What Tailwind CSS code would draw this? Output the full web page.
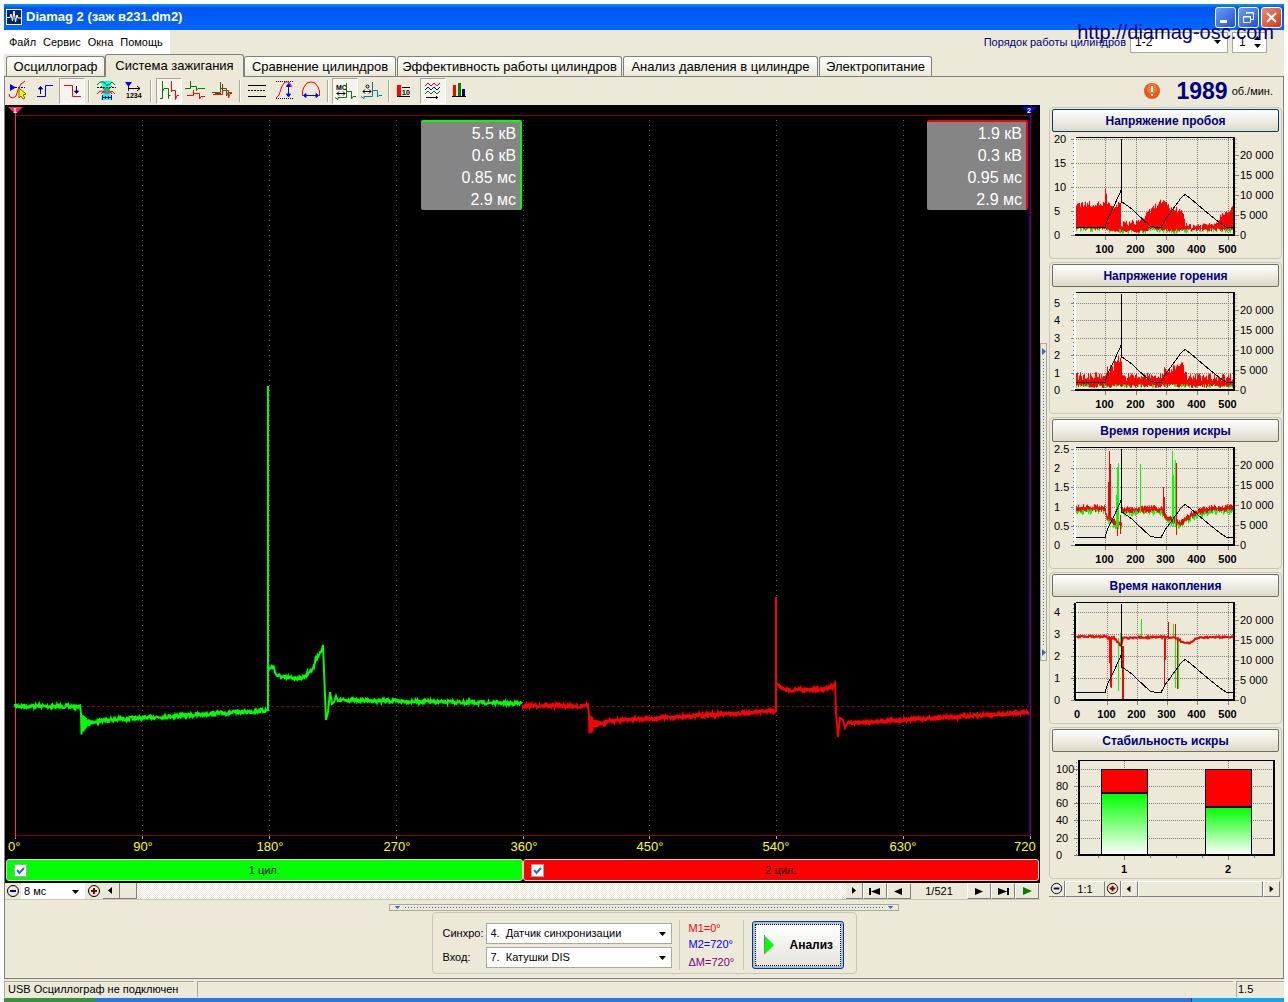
<!DOCTYPE html>
<html lang="ru">
<head>
<meta charset="utf-8">
<title>Diamag 2</title>
<script src="https://cdn.jsdelivr.net/npm/@tailwindcss/browser@4"></script>
</head>
<body class="relative min-h-screen bg-white font-['Liberation_Sans',Arial,sans-serif] text-[12px] leading-4 text-black">
<div class="flex min-h-screen flex-col px-1 pt-1">

  <!-- Title bar -->
  <header class="flex h-[26px] items-center bg-linear-to-b from-[#0997ff] from-0% via-[#0053ee] via-15% to-[#0066ff] to-90% pl-[2px] pr-[2px]">
    <svg class="h-4 w-4" viewBox="0 0 16 16"><rect width="16" height="16" fill="#fff"/><rect x="1" y="1" width="14" height="14" fill="#0a246a"/><path d="M1 8.500H4L5 5L6.500 12L8 2L9.500 13L11 6L12 9H15" fill="none" stroke="#fff"/></svg>
    <h1 class="ml-1 grow text-[13px] font-bold text-white">Diamag 2 (заж в231.dm2)</h1>
    <div class="flex gap-[2px]">
      <button aria-label="Свернуть" class="h-[21px] w-[21px] rounded-[3px] border border-white bg-linear-to-br from-[#6f9cf5] to-[#1f4fd8]"><svg viewBox="0 0 19 19"><rect x="4" y="12" width="7" height="3" fill="#fff"/></svg></button>
      <button aria-label="Восстановить" class="h-[21px] w-[21px] rounded-[3px] border border-white bg-linear-to-br from-[#6f9cf5] to-[#1f4fd8]"><svg viewBox="0 0 19 19" fill="none" stroke="#fff"><path d="M7.500 6V4.500H14.500V11.500H12M7 5H15"/><path d="M4.500 8.500H11.500V14.500H4.500ZM4 9H12"/></svg></button>
      <button aria-label="Закрыть" class="h-[21px] w-[21px] rounded-[3px] border border-white bg-linear-to-br from-[#ee8a6c] to-[#cc330c]"><svg viewBox="0 0 19 19"><path d="M5 5L14 14M14 5L5 14" stroke="#fff" stroke-width="2"/></svg></button>
    </div>
  </header>

  <div class="flex grow flex-col bg-[#ece9d8]">
    <!-- Menu and cylinder order -->
    <div class="flex h-6 items-center justify-between">
      <nav class="flex h-6 w-[166px] items-center gap-[7px] bg-white pl-[5px] text-[11px]">
        <a href="#">Файл</a><a href="#">Сервис</a><a href="#">Окна</a><a href="#">Помощь</a>
      </nav>
      <div class="flex items-center gap-1 pr-[17px]">
        <label for="order" class="text-[11px] text-[#000080]">Порядок работы цилиндров</label>
        <span class="relative"><select id="order" class="block h-[21px] w-[98px] appearance-none border border-[#aca899] bg-white pl-1 text-[12px]"><option>1-2</option></select>
          <svg class="pointer-events-none absolute right-[7px] top-2 h-1 w-[7px]" viewBox="0 0 7 4"><path d="M0 0H7L3.500 4Z"/></svg></span>
        <span class="relative"><input aria-label="Цилиндр" value="1" class="block h-[21px] w-[35px] border border-[#aca899] bg-white pl-[6px] text-[12px]">
          <svg class="pointer-events-none absolute right-[6px] top-1 h-3 w-[7px]" viewBox="0 0 7 12"><path d="M0 4H7L3.500 0ZM0 8H7L3.500 12Z"/></svg></span>
      </div>
    </div>

    <!-- Tabs -->
    <div role="tablist" class="flex h-[23px] items-end border-b border-[#808080] pl-[2px] text-[13px]">
      <button role="tab" class="h-5 w-[99px] rounded-t-[3px] border border-b-0 border-[#808080] bg-linear-to-b from-white to-[#ece9d8]">Осциллограф</button>
      <button role="tab" aria-selected="true" class="-mb-px h-[23px] w-[139px] rounded-t-[3px] border border-b-0 border-[#808080] bg-[#ece9d8]">Система зажигания</button>
      <button role="tab" class="h-5 w-[152px] rounded-t-[3px] border border-b-0 border-[#808080] bg-linear-to-b from-white to-[#ece9d8]">Сравнение цилиндров</button>
      <button role="tab" class="ml-px h-5 w-[225px] rounded-t-[3px] border border-b-0 border-[#808080] bg-linear-to-b from-white to-[#ece9d8]">Эффективность работы цилиндров</button>
      <button role="tab" class="ml-px h-5 w-[195px] rounded-t-[3px] border border-b-0 border-[#808080] bg-linear-to-b from-white to-[#ece9d8]">Анализ давления в цилиндре</button>
      <button role="tab" class="ml-px h-5 w-[113px] rounded-t-[3px] border border-b-0 border-[#808080] bg-linear-to-b from-white to-[#ece9d8]">Электропитание</button>
    </div>

    <main class="flex grow flex-col border-x border-b border-[#808080]">
      <!-- Toolbar -->
      <div class="flex h-7 items-center justify-between">
        <div class="flex gap-px">
          <button aria-label="Курсор" class="h-[26px] w-[26px]"><svg viewBox="0 0 26 26" fill="none"><path d="M5 6L11 9.500L5 13Z" fill="#00f"/><path d="M10 9.500H20" stroke="#000080" stroke-dasharray="2 1"/><path d="M4 16L5 19L8 20L11 18L13 12L16 6L20 3" stroke="red"/><path d="M14 10L21 16L18 17L20 20L18 21L16 18L14 20Z" fill="#ff0" stroke="#806000"/></svg></button>
          <button aria-label="По фронту" class="h-[26px] w-[26px]"><svg viewBox="0 0 26 26" fill="none"><path d="M5 18.500H13.500V7.500H21" stroke="#00f"/><path d="M8.500 16V9M6.500 11L8.500 8.500L10.500 11Z" stroke="#000080" fill="#000080"/></svg></button>
          <button aria-label="По спаду" aria-pressed="true" class="h-[26px] w-[26px] border border-t-[#aca899] border-l-[#aca899] border-r-white border-b-white bg-[#f6f4ec]"><svg viewBox="1 1 24 24" fill="none"><path d="M5 7.500H13.500V18.500H22" stroke="red"/><path d="M17.500 8V15M15.500 13L17.500 15.500L19.500 13Z" stroke="#000080" fill="#000080"/></svg></button>
          <span class="mx-[2px] my-[2px] w-[2px] border-l border-[#aca899] bg-white"></span>
          <button aria-label="Наложение" class="h-[26px] w-[26px]"><svg viewBox="0 0 26 26" fill="none"><path d="M8 3H19L17 9V15L19 22H8L10 15V9Z" fill="#0ff"/><path d="M4 7L7 4L11 4L13 7L16 7L19 4L22 7M8 8L11 11H16L19 8" stroke="green"/><path d="M4 9.500H23" stroke="#000" stroke-dasharray="2 1"/><path d="M4 16L7 13H9L12 15H16L19 13L22 16M8 16L11 13H17L19 16" stroke="red"/><path d="M9.500 17V22M18.500 17V22M10 19.500H18M12.500 18V21M15.500 18V21" stroke="#000080"/></svg></button>
          <button aria-label="Нумерация" class="h-[26px] w-[26px]"><svg viewBox="0 0 26 26" fill="none"><path d="M5 4H12L8.500 9Z" fill="#00f"/><path d="M8.500 4V13" stroke="#00f"/><path d="M8 10.500H20M17 8L20 10.500L17 13" stroke="#000"/><text x="6" y="20" font-size="7" font-weight="bold" font-family="Liberation Sans" fill="#000">1234</text></svg></button>
          <span class="mx-[3px] my-[2px] w-[2px] border-l border-[#aca899] bg-white"></span>
          <button aria-label="Парад" aria-pressed="true" class="h-[26px] w-[26px] border border-t-[#aca899] border-l-[#aca899] border-r-white border-b-white bg-[#f6f4ec]"><svg viewBox="1 1 24 24" fill="none"><path d="M4 20.500H6.500V3V13.500L8 10.500H12.500V20.500V17.500H14.500" stroke="green"/><path d="M15.500 3V14V12.500H19.500V21.500L21 17.500H23" stroke="red"/></svg></button>
          <button aria-label="Растр" class="h-[26px] w-[26px]"><svg viewBox="0 0 26 26" fill="none"><path d="M2 10.500H7.500V3V8.500H13.500V12.500L15 10.500H22" stroke="green"/><path d="M4 17.500H10.500V12V15.500H16.500V21L18 18.500H22" stroke="red"/></svg></button>
          <button aria-label="Суперпозиция" class="h-[26px] w-[26px]"><svg viewBox="0 0 26 26" fill="none"><path d="M2 14.500H10.500V4V10.500H16.500V18L18 14.500H22" stroke="green"/><path d="M3 16.500H12.500V6V12.500H18.500V20L20 15.500H22M5 15.500H11" stroke="red"/></svg></button>
          <span class="mx-[2px] my-[2px] w-[2px] border-l border-[#aca899] bg-white"></span>
          <button aria-label="Линии" class="h-[26px] w-[26px]"><svg viewBox="0 0 26 26" fill="none" stroke="#000"><path d="M4 7.500H22M4 18.500H22"/><path d="M4 12.500H22" stroke-dasharray="2 1"/></svg></button>
          <button aria-label="Вертикальный масштаб" class="h-[26px] w-[26px]"><svg viewBox="0 0 26 26" fill="none"><path d="M5 3.500H22M5 20.500H22" stroke="#000" stroke-dasharray="1 1"/><path d="M5 20L8 17L11 8L14 4H18L21 9" stroke="red"/><path d="M17.500 7V18M15.500 8.500L17.500 5.500L19.500 8.500ZM15.500 16L17.500 19L19.500 16Z" fill="#00f" stroke="#00f"/></svg></button>
          <button aria-label="Горизонтальный масштаб" class="h-[26px] w-[26px]"><svg viewBox="0 0 26 26" fill="none"><path d="M4.500 18V13L6 9L9 5L13 4L17 5L20 9L21.500 13V18" stroke="red"/><path d="M7 17.500H19M8 15.500L5.500 17.500L8 19.500ZM18 15.500L20.500 17.500L18 19.500Z" fill="#00f" stroke="#00f"/></svg></button>
          <span class="mx-[2px] my-[2px] w-[2px] border-l border-[#aca899] bg-white"></span>
          <button aria-label="Миллисекунды" aria-pressed="true" class="h-[26px] w-[26px] border border-t-[#aca899] border-l-[#aca899] border-r-white border-b-white bg-[#f6f4ec]"><svg viewBox="1 1 24 24" fill="none"><text x="4" y="12" font-size="7" font-weight="bold" font-family="Liberation Sans" fill="#000">МС</text><path d="M5 15.500H13M7 13.500L5 15.500L7 17.500M11 13.500L13 15.500L11 17.500" stroke="#000"/><path d="M3 19.500L6 21.500V19.500H14.500V5V13.500H19.500V21L21 18.500H24" stroke="green"/></svg></button>
          <button aria-label="Градусы" class="h-[26px] w-[26px]"><svg viewBox="0 0 26 26" fill="none"><circle cx="8.500" cy="8.500" r="1.500" stroke="#000"/><path d="M4 13.500H12M6 11.500L4 13.500L6 15.500M10 11.500L12 13.500L10 15.500" stroke="#000"/><path d="M2 18.500L5 20.500V18.500H13.500V4V12.500H18.500V19L20 17.500H23" stroke="#008080"/></svg></button>
          <span class="mx-[2px] my-[2px] w-[2px] border-l border-[#aca899] bg-white"></span>
          <button aria-label="Числа" class="h-[26px] w-[26px]"><svg viewBox="0 0 26 26" fill="none"><rect x="4" y="7" width="4" height="11" fill="red"/><path d="M4 18.500H17M9 9.500H17" stroke="#000"/><text x="9" y="17" font-size="7" font-weight="bold" font-family="Liberation Sans" fill="#000">10</text></svg></button>
          <button aria-label="Графики" aria-pressed="true" class="h-[26px] w-[26px] border border-t-[#aca899] border-l-[#aca899] border-r-white border-b-white bg-[#f6f4ec]"><svg viewBox="1 1 24 24" fill="none"><path d="M5 8L8 5L11 8L14 5L17 8L20 5" stroke="red"/><path d="M5 12L8 9L11 12L14 9L17 12L20 9" stroke="#00f"/><path d="M5 16L8 13L11 16L14 13L17 16L20 13" stroke="green"/><path d="M6 19.500H18M16.500 18V21" stroke="#000"/></svg></button>
          <button aria-label="Гистограмма" class="h-[26px] w-[26px]"><svg viewBox="0 0 26 26"><rect x="6" y="7" width="3" height="11" fill="red"/><rect x="11" y="5" width="3" height="13" fill="green"/><rect x="15" y="11" width="3" height="7" fill="#000080"/><rect x="5" y="18" width="14" height="1"/></svg></button>
        </div>
        <div class="flex items-center pr-[10px]">
          <svg class="mr-4 h-4 w-4" viewBox="0 0 16 16"><circle cx="8" cy="8" r="8" fill="#e85a10"/><circle cx="8" cy="6" r="5" fill="#f07a38"/><path d="M8 3V9M8 11V13" stroke="#fff" stroke-width="2"/></svg>
          <output class="text-[23px] font-bold text-[#000080]">1989</output>
          <span class="ml-1 text-[11px]">об./мин.</span>
        </div>
      </div>

      <div class="flex">
        <!-- Oscilloscope column -->
        <section class="relative min-w-0 grow">
          <svg id="scope" class="block h-auto w-full bg-black" viewBox="5 105 1035 752" font-family="Liberation Sans, Arial, sans-serif" font-size="13" fill="#ff0">
            <g fill="none">
              <path d="M15 115.500H1030M15 835.500H1030" stroke="#800000"/>
              <path d="M142.500 120V835M269.500 120V835M396.500 120V835M523.500 120V835M649.500 120V835M776.500 120V835M903.500 120V835" stroke="#606060" stroke-dasharray="1 4"/>
              <path d="M15.500 836V839M142.500 836V839M269.500 836V839M396.500 836V839M523.500 836V839M649.500 836V839M776.500 836V839M903.500 836V839M1030.500 836V839" stroke="#aaa"/>
              <path d="M12 706.500H1030" stroke="#a00000" stroke-dasharray="2 3"/>
              <path d="M15.500 110V838" stroke="#ff2860"/>
              <path d="M1029.500 110V835" stroke="#0000c0"/><path d="M1030.500 115V835" stroke="#a00000"/>
            </g>
            <path d="M8 107H23L15.500 114Z" fill="#ff2860"/><path d="M1022 107H1037L1029.500 114Z" fill="#00f"/>
            <text x="13" y="113" font-size="7" font-weight="bold" fill="#fff">1</text><text x="1027" y="113" font-size="7" font-weight="bold" fill="#fff">2</text>
            <path id="wave1" fill="none" stroke="#0f0" stroke-width="2"/><path id="wave2" fill="none" stroke="red" stroke-width="2"/>
            <text x="8" y="851">0°</text>
            <g text-anchor="middle"><text x="143" y="851">90°</text><text x="270" y="851">180°</text><text x="397" y="851">270°</text><text x="524" y="851">360°</text><text x="650" y="851">450°</text><text x="776" y="851">540°</text><text x="903" y="851">630°</text></g>
            <text x="1014" y="851">720</text>
          </svg>
          <div class="absolute left-[40.200%] top-[15px] h-[90px] w-[101px] rounded-[2px] border-r-2 border-t-2 border-[#0f0] bg-[#858585] pr-1 pt-px text-right text-[16px] leading-[22px] text-white"><p>5.5 кВ</p><p>0.6 кВ</p><p>0.85 мс</p><p>2.9 мс</p></div>
          <div class="absolute right-3 top-[15px] h-[90px] w-[101px] rounded-[2px] border-r-2 border-t-2 border-[red] bg-[#858585] pr-1 pt-px text-right text-[16px] leading-[22px] text-white"><p>1.9 кВ</p><p>0.3 кВ</p><p>0.95 мс</p><p>2.9 мс</p></div>

          <div class="grid h-[26px] grid-cols-2 bg-black px-px py-[2px] text-[11px]">
            <label class="flex items-center rounded-[3px] border border-[#d8d4c0] bg-[#0f0] pl-[7px] pr-5"><span class="relative flex"><input type="checkbox" checked class="peer h-[13px] w-[13px] appearance-none border border-[#aca899] bg-white"><svg class="pointer-events-none absolute left-0 top-0 hidden h-[13px] w-[13px] peer-checked:block" viewBox="0 0 13 13"><path d="M3 6L5.500 9L10 4" fill="none" stroke="#316ac5" stroke-width="2"/></svg></span><span class="grow text-center">1 цил.</span></label>
            <label class="flex items-center rounded-[3px] border border-[#d8d4c0] bg-[red] pl-[7px] pr-5"><span class="relative flex"><input type="checkbox" checked class="peer h-[13px] w-[13px] appearance-none border border-[#aca899] bg-white"><svg class="pointer-events-none absolute left-0 top-0 hidden h-[13px] w-[13px] peer-checked:block" viewBox="0 0 13 13"><path d="M3 6L5.500 9L10 4" fill="none" stroke="#316ac5" stroke-width="2"/></svg></span><span class="grow text-center">2 цил.</span></label>
          </div>

          <div class="flex h-[17px] border-b border-[#cbc7b8]">
            <button aria-label="Уменьшить" class="w-4"><svg class="h-4 w-4" viewBox="0 0 16 16"><circle cx="8" cy="8" r="5.500" fill="none" stroke="#000"/><path d="M5 8H11" stroke="#000080" stroke-width="2"/></svg></button>
            <span class="relative"><select aria-label="Развёртка" class="block h-4 w-16 appearance-none bg-white pl-[3px] text-[11px] leading-4"><option>8 мс</option></select>
              <svg class="pointer-events-none absolute right-[6px] top-[7px] h-1 w-[7px]" viewBox="0 0 7 4"><path d="M0 0H7L3.500 4Z"/></svg></span>
            <button aria-label="Увеличить" class="w-[18px]"><svg class="mx-auto h-4 w-4" viewBox="0 0 16 16"><circle cx="8" cy="8" r="5.500" fill="none" stroke="#000"/><path d="M5 8H11M8 5V11" stroke="#800000" stroke-width="2"/></svg></button>
            <button aria-label="Влево" class="w-[17px] border-b border-r border-[#808080]"><svg class="h-4 w-4" viewBox="0 0 16 16"><path d="M9 4V11L5 7.500Z"/></svg></button>
            <button aria-label="Ползунок" class="w-[17px] border-b border-r border-[#808080]"></button>
            <div class="grow bg-[repeating-conic-gradient(#fff_0_25%,#ece9d8_0_50%)] bg-[length:2px_2px]"></div>
            <button aria-label="Вправо" class="w-[17px] border-b border-r border-[#808080]"><svg class="h-4 w-4" viewBox="0 0 16 16"><path d="M6 4V11L10 7.500Z"/></svg></button>
            <button aria-label="В начало" class="w-6 border border-t-white border-l-white border-r-[#808080] border-b-[#808080]"><svg viewBox="0 0 22 14" class="h-[14px]"><path d="M5 4H7V11H5ZM16 4V11L7 7.500Z"/></svg></button>
            <button aria-label="Назад" class="w-6 border border-t-white border-l-white border-r-[#808080] border-b-[#808080]"><svg viewBox="0 0 22 14" class="h-[14px]"><path d="M14 4V11L6 7.500Z"/></svg></button>
            <output class="w-[56px] text-center text-[11px]">1/521</output>
            <button aria-label="Вперёд" class="w-6 border border-t-white border-l-white border-r-[#808080] border-b-[#808080]"><svg viewBox="0 0 22 14" class="h-[14px]"><path d="M7 4V11L15 7.500Z"/></svg></button>
            <button aria-label="В конец" class="w-6 border border-t-white border-l-white border-r-[#808080] border-b-[#808080]"><svg viewBox="0 0 22 14" class="h-[14px]"><path d="M6 4V11L15 7.500ZM15 4H17V11H15Z"/></svg></button>
            <button aria-label="Пуск" class="mr-px w-6 border border-t-white border-l-white border-r-[#808080] border-b-[#808080]"><svg viewBox="0 0 22 14" class="h-[14px]"><path d="M7 3V11L16 7Z" fill="green"/></svg></button>
          </div>
        </section>

        <!-- Vertical splitter -->
        <div class="flex w-2 shrink-0 items-center pb-[2px]">
          <div class="flex h-[318px] w-[7px] flex-col items-center justify-between border border-[#aca899] py-1">
            <svg class="h-[7px] w-1" viewBox="0 0 4 7"><path d="M0 0V7L4 3.500Z" fill="#316ac5"/></svg>
            <div class="my-1 w-px grow bg-[repeating-linear-gradient(#316ac5_0_1px,transparent_1px_3px)]"></div>
            <svg class="h-[7px] w-1" viewBox="0 0 4 7"><path d="M0 0V7L4 3.500Z" fill="#316ac5"/></svg>
          </div>
        </div>

        <!-- Trend charts -->
        <aside class="flex w-[235px] shrink-0 flex-col gap-[3px] px-px pt-[2px] text-[12px]">
          <section class="rounded-[4px] border border-[#cbc7b8] px-[2px] py-px"><button class="block h-[23px] w-full rounded-[2px] border border-[#003c74] bg-linear-to-b from-white to-[#ded9c8] font-bold text-[#000080]">Напряжение пробоя</button><svg id="c1" class="block h-auto w-full" viewBox="12 27 227 125" font-family="Liberation Sans, Arial, sans-serif" font-size="11"></svg></section>
          <section class="rounded-[4px] border border-[#cbc7b8] px-[2px] py-px"><button class="block h-[23px] w-full rounded-[2px] border border-[#716f64] bg-linear-to-b from-white to-[#ded9c8] font-bold text-[#000080]">Напряжение горения</button><svg id="c2" class="block h-auto w-full" viewBox="12 27 227 125" font-family="Liberation Sans, Arial, sans-serif" font-size="11"></svg></section>
          <section class="rounded-[4px] border border-[#cbc7b8] px-[2px] py-px"><button class="block h-[23px] w-full rounded-[2px] border border-[#716f64] bg-linear-to-b from-white to-[#ded9c8] font-bold text-[#000080]">Время горения искры</button><svg id="c3" class="block h-auto w-full" viewBox="12 27 227 125" font-family="Liberation Sans, Arial, sans-serif" font-size="11"></svg></section>
          <section class="rounded-[4px] border border-[#cbc7b8] px-[2px] py-px"><button class="block h-[23px] w-full rounded-[2px] border border-[#716f64] bg-linear-to-b from-white to-[#ded9c8] font-bold text-[#000080]">Время накопления</button><svg id="c4" class="block h-auto w-full" viewBox="12 27 227 125" font-family="Liberation Sans, Arial, sans-serif" font-size="11"></svg></section>
          <section class="rounded-[4px] border border-[#cbc7b8] px-[2px] py-px"><button class="block h-[23px] w-full rounded-[2px] border border-[#716f64] bg-linear-to-b from-white to-[#ded9c8] font-bold text-[#000080]">Стабильность искры</button>
            <svg class="block h-auto w-full" viewBox="12 30 227 125" font-family="Liberation Sans, Arial, sans-serif" font-size="11">
              <defs><linearGradient id="g" x1="0" y1="0" x2="0" y2="1"><stop offset="0" stop-color="#0f0"/><stop offset="1" stop-color="#fff"/></linearGradient></defs>
              <path d="M39 47.500H234M39 64.500H234M39 81.500H234M39 98.500H234M39 116.500H234M84.500 39V133M188.500 39V133" stroke="#808080" stroke-dasharray="1 1"/>
              <path d="M34 47.500H38M34 64.500H38M34 81.500H38M34 98.500H38M34 116.500H38M34 133.500H38M84.500 134V138M188.500 134V138M58.500 134V136M110.500 134V136M136.500 134V136M162.500 134V136M214.500 134V136" stroke="#808080"/>
              <path d="M36.500 40V133" stroke="#808080" stroke-width="1" stroke-dasharray="1 3"/>
              <path d="M38 38.500H235" stroke="#000"/><path d="M39 38V133H234V38" fill="none" stroke="#000" stroke-width="2"/>
              <g stroke="#000"><rect x="61.500" y="47.500" width="46" height="24" fill="red"/><rect x="61.500" y="71.500" width="46" height="61" fill="url(#g)"/><rect x="165.500" y="47.500" width="46" height="38" fill="red"/><rect x="165.500" y="85.500" width="46" height="47" fill="url(#g)"/></g>
              <path d="M61 71H108M165 85H212" stroke="#000" stroke-width="2"/>
              <text x="16" y="51">100</text><text x="16" y="68">80</text><text x="16" y="85">60</text><text x="16" y="102">40</text><text x="16" y="120">20</text><text x="16" y="137">0</text>
              <g font-weight="bold"><text x="81" y="151">1</text><text x="185" y="151">2</text></g>
            </svg></section>
          <div class="-mt-px flex h-4">
            <button aria-label="Уменьшить" class="w-4 border-b border-r border-[#808080]"><svg viewBox="0 0 16 16"><circle cx="8" cy="8" r="5.500" fill="none" stroke="#000"/><path d="M5 8H11" stroke="#000080" stroke-width="2"/></svg></button>
            <button class="w-10 border border-t-white border-l-white border-r-[#808080] border-b-[#808080] text-[11px] leading-[14px]">1:1</button>
            <button aria-label="Увеличить" class="w-4 border-b border-r border-[#808080]"><svg viewBox="0 0 16 16"><circle cx="8" cy="8" r="5.500" fill="none" stroke="#000"/><path d="M5 8H11M8 5V11" stroke="#800000" stroke-width="2"/></svg></button>
            <button aria-label="Влево" class="w-[17px] border border-t-white border-l-white border-r-[#808080] border-b-[#808080]"><svg viewBox="0 0 16 16"><path d="M9 4V11L5 7.500Z"/></svg></button>
            <button aria-label="Ползунок" class="grow border border-t-white border-l-white border-r-[#808080] border-b-[#808080]"></button>
            <button aria-label="Вправо" class="mr-[2px] w-[17px] border border-t-white border-l-white border-r-[#808080] border-b-[#808080]"><svg viewBox="0 0 16 16"><path d="M6 4V11L10 7.500Z"/></svg></button>
          </div>
        </aside>
      </div>

      <!-- Horizontal splitter and source panel -->
      <div class="flex flex-col items-center pb-1 pt-1">
        <div class="flex h-[7px] w-[510px] items-center justify-between border border-[#aca899] px-1">
          <svg class="h-[3px] w-[7px]" viewBox="0 0 7 4"><path d="M0 0H7L3.500 4Z" fill="#316ac5"/></svg>
          <div class="mx-1 h-px grow bg-[repeating-linear-gradient(90deg,#316ac5_0_1px,transparent_1px_3px)]"></div>
          <svg class="h-[3px] w-[7px]" viewBox="0 0 7 4"><path d="M0 0H7L3.500 4Z" fill="#316ac5"/></svg>
        </div>
        <div class="mt-px flex h-[62px] w-[425px] items-center rounded-[4px] border border-[#cbc7b8] pl-[10px] pr-3 pt-1">
          <div class="grid grow grid-cols-[43px_1fr] items-center gap-y-[3px] text-[11px]">
            <label for="sync">Синхро:</label>
            <span class="relative"><select id="sync" class="block h-[21px] w-full appearance-none border border-[#aca899] bg-white pl-1 text-[11px]"><option>4.&nbsp; Датчик синхронизации</option></select>
              <svg class="pointer-events-none absolute right-[6px] top-[9px] h-1 w-[7px]" viewBox="0 0 7 4"><path d="M0 0H7L3.500 4Z"/></svg></span>
            <label for="input">Вход:</label>
            <span class="relative"><select id="input" class="block h-[21px] w-full appearance-none border border-[#aca899] bg-white pl-1 text-[11px]"><option>7.&nbsp; Катушки DIS</option></select>
              <svg class="pointer-events-none absolute right-[6px] top-[9px] h-1 w-[7px]" viewBox="0 0 7 4"><path d="M0 0H7L3.500 4Z"/></svg></span>
          </div>
          <div class="ml-[7px] h-[50px] w-[65px] border-x border-[#cbc7b8] pl-[9px] text-[11px]"><p class="text-[red]">M1=0°</p><p class="text-[#00f]">M2=720°</p><p class="pt-[2px] text-[#800080]">ΔM=720°</p></div>
          <button class="ml-2 flex h-[48px] w-[92px] items-center rounded-[3px] border border-[#003c74] bg-[#a8c0ee] p-[2px] text-[12px] font-bold"><span class="flex h-full w-full items-center border border-dotted border-black bg-linear-to-b from-white to-[#e6e4dc] pl-2"><svg class="mr-4 h-5 w-[10px]" viewBox="0 0 10 20"><path d="M.5 0V19" stroke="#808080"/><path d="M1 1L10 10L1 19Z" fill="#0f0"/></svg>Анализ</span></button>
        </div>
      </div>
    </main>

    <!-- Status bar -->
    <footer class="flex h-[19px] gap-[3px] pb-px pt-[2px] text-[11px] leading-[14px]">
      <p class="w-[190px] border-l border-t border-[#aca899] pl-[3px]">USB Осциллограф не подключен</p>
      <p class="grow border-l border-t border-[#aca899]"></p>
      <p class="w-12 border-l border-t border-[#aca899] pl-px">1.5</p>
    </footer>
  </div>
  <div class="flex h-1 bg-[#2f74e4]"><div class="w-[92px] rounded-tr-[4px] bg-[#3c8f3c]"></div><div class="grow"></div><div class="w-[93px] border-l border-[#0a3f9f] bg-[#17a5ee]"></div></div>
</div>
<p class="pointer-events-none absolute right-[14px] top-5 text-[20px] leading-6 text-[#000080]">http://diamag-osc.com</p>

<script>
// Deterministic noise keeps the traces identical on every load
let seed = 7;
const rnd = () => (seed = (seed * 16807) % 2147483647) / 2147483647;
// Linear interpolation through a list of [x, y] points
const at = (pts, x) => {
  for (let i = 1; i < pts.length; i++) if (x <= pts[i][0]) {
    const [a, b] = pts[i - 1], [c, d] = pts[i];
    return c === a ? d : b + (d - b) * (x - a) / (c - a);
  }
  return pts[pts.length - 1][1];
};
const noisy = (pts, amp, step = 1) => {
  let s = '';
  for (let x = pts[0][0]; x <= pts[pts.length - 1][0]; x += step) s += `L${x} ${(at(pts, x) + (rnd() - .5) * amp).toFixed(1)}`;
  return s;
};
const ring = (x0, y) => {
  let s = '';
  for (let i = 0; i < 18; i++) { const a = 15 * Math.exp(-i / 6) * (.6 + rnd() * .4); s += `L${x0 + i} ${y - a * .7}L${x0 + i + .5} ${y + a}`; }
  return s;
};
document.getElementById('wave1').setAttribute('d', 'M15 706' + noisy([[15, 706], [80, 706.5]], 4, .5) + ring(81, 722) +
  noisy([[99, 720.5], [267, 710.5]], 4, .5) + 'L268 710V386V668' + noisy([[269, 668], [274, 667], [276, 675], [285, 678], [302, 678], [308, 673], [314, 667], [316, 658], [322, 651]], 4, .5) +
  'L323 645L326 720L328 712L330 692L332 704L334 702L336 696L338 701' + noisy([[339, 700], [522, 703.5]], 3.5, .5));
document.getElementById('wave2').setAttribute('d', 'M523 705' + noisy([[523, 705.5], [588, 706]], 4, .5) + ring(589, 723) +
  noisy([[607, 721], [775, 711]], 4, .5) + 'L776 711V597V682' + noisy([[777, 685], [785, 690], [815, 690], [833, 687]], 4, .5) +
  'L835 683L836 712L838 737L840 718L843 720L845 728L848 722' + noisy([[849, 723], [900, 720], [1029, 712.5]], 3.5, .5));

const rpm = [[36, 122.5], [65, 122.5], [68, 113], [73, 103], [80, 88], [81, 86]];
const rpm2 = [[82, 97], [92, 104], [97, 109], [110, 121], [116, 122.5], [121, 122.5], [125, 115], [133, 104], [141, 93], [145, 89.5], [150, 93], [158, 100], [170, 110], [180, 118], [186, 122], [194, 122.5]];
const poly = p => p.map(q => q.join(' ')).join('L');
const bars = (color, top, bot, at1, at2) => {
  let d = '';
  for (let x = 36; x < 194; x++) d += `M${x + .5} ${(at(top, x) - rnd() * at1).toFixed(1)}V${(at(bot, x) + rnd() * at2).toFixed(1)}`;
  return `<path d="${d}" stroke="${color}"/>`;
};
const vl = (color, list) => `<path d="${list.map(([x, a, b]) => `M${x} ${a}V${b}`).join('')}" stroke="${color}"/>`;
function chart(id, left, series, x0, topRpm) {
  const xs = x0 ? [67.5, 97.5, 127.5, 157.5, 188.5] : [65.5, 96.5, 126.5, 157.5, 188.5];
  const d = [], t = [];
  let labels = '';
  left.forEach(([v, y]) => { if (y < 130) d.push(`M36 ${y + .5}H193`); t.push(`M31 ${y + .5}H35`); labels += `<text x="14" y="${y + 4}">${v}</text>`; });
  xs.forEach((x, i) => { d.push(`M${x} 33V130`); t.push(`M${x} 131V135`); labels += `<text x="${x - 1}" y="148" text-anchor="middle" font-weight="bold">${(i + 1) * 100}</text>`; });
  if (x0) labels += '<text x="37" y="148" text-anchor="middle" font-weight="bold">0</text>';
  [['20 000', 50], ['15 000', 70], ['10 000', 90], ['5 000', 110], ['0', 130]].forEach(([v, y]) => { t.push(`M195 ${y + .5}H199`); labels += `<text x="200" y="${y + 4}">${v}</text>`; });
  document.getElementById(id).innerHTML =
    `<path d="${d.join('')}" stroke="#808080" stroke-dasharray="1 1"/><path d="${t.join('')}" stroke="#808080"/>` +
    `<path d="M33.500 34V130M196 34V130" stroke="#808080" stroke-dasharray="1 3" stroke-width="1"/>` +
    `<path d="M35 33V130" stroke="${x0 ? '#000' : '#fff'}" stroke-width="2"/>` + (x0 ? '<path d="M37 33V130" stroke="#fff" stroke-width="1"/>' : '') +
    series +
    `<path d="M36 32.500H195" stroke="#000"/><path d="M194 32V131M35 130H195" stroke="#000" stroke-width="2"/>` +
    `<path d="M${poly(rpm)}L81.500 ${topRpm}V97L${poly(rpm2)}" fill="none" stroke="#000" shape-rendering="crispEdges"/>` + labels;
}
const T1 = [[36, 102], [64, 102], [65, 86], [67, 101], [72, 107], [80, 101], [81, 122], [97, 120], [103, 116], [107, 112], [115, 104], [121, 99], [130, 106], [143, 109], [145, 124], [165, 123], [177, 120], [181, 112], [187, 108], [194, 106]];
const B1 = [[36, 122], [65, 122], [67, 124], [80, 124], [105, 125], [112, 121], [120, 123], [130, 124], [194, 123]];
chart('c1', [['20', 34], ['15', 58], ['10', 82], ['5', 106], ['0', 130]],
  bars('#0f0', T1.map(([x, y]) => [x, y + 4]), B1, 3, 5) + bars('red', T1, B1, 6, 3), 0, 34);
const T2 = [[36, 120], [64, 120], [67, 113], [73, 112], [74, 103], [81, 103], [82, 121], [122, 120], [124, 115], [132, 113], [138, 107], [143, 110], [145, 119], [148, 121], [194, 121]];
const B2 = [[36, 124], [194, 124]];
chart('c2', [['5', 43], ['4', 60], ['3', 78], ['2', 95], ['1', 113], ['0', 130]],
  bars('#0f0', T2.map(([x, y]) => [x, y + 3]), B2, 2, 4) + bars('red', T2, B2, 8, 4), 0, 34);
const M3 = [[36, 94], [64, 94], [66, 102], [72, 107], [81, 110], [82, 96], [95, 95], [121, 95], [125, 102], [132, 106], [140, 109], [150, 101], [160, 97], [175, 94], [194, 94]];
chart('c3', [['2.5', 34], ['2', 53], ['1.5', 72], ['1', 92], ['0.5', 111], ['0', 130]],
  bars('#0f0', M3, M3.map(([x, y]) => [x, y + 1]), 2, 5) + bars('red', M3.map(([x, y]) => [x, y - 1]), M3, 4, 3) +
  vl('#0f0', [[76.5, 80, 110], [77.500, 52, 110], [78.500, 48, 110], [100.500, 49, 98], [132.500, 36, 105], [133.500, 60, 108], [135.500, 45, 112]]) +
  vl('red', [[69.5, 36, 105], [70.500, 49, 105], [68.500, 67, 104], [123.500, 72, 101], [124.500, 82, 101], [136.500, 48, 120], [77.500, 112, 121], [80.500, 100, 119]]), 0, 34);
const M4 = [[37, 66.500], [65, 66.500], [68, 68], [74, 68], [81, 76], [83, 68], [100, 67.500], [125, 67], [136, 68], [145, 73.500], [150, 73.500], [157, 68], [194, 66.500]];
chart('c4', [['4', 42], ['3', 64], ['2', 86], ['1', 108], ['0', 130]],
  vl('#0f0', [[78.5, 68, 121], [80.500, 63, 75], [101.500, 49, 68], [133.500, 54, 68], [135.500, 68, 118], [138.500, 70, 119]]) +
  vl('red', [[69.5, 68, 93], [70.500, 68, 117], [71.500, 66, 118], [82.500, 76, 130], [83.500, 76, 130], [124.500, 68, 115], [125.500, 68, 90], [128.500, 52, 68], [135.500, 54, 68], [137.500, 68, 119]]) +
  `<path d="M37 67${noisy(M4, 2)}" fill="none" stroke="#0f0"/><path d="M37 66${noisy(M4, 2)}" fill="none" stroke="red" stroke-width="2"/>`, 1, 34);
</script>
</body>
</html>
